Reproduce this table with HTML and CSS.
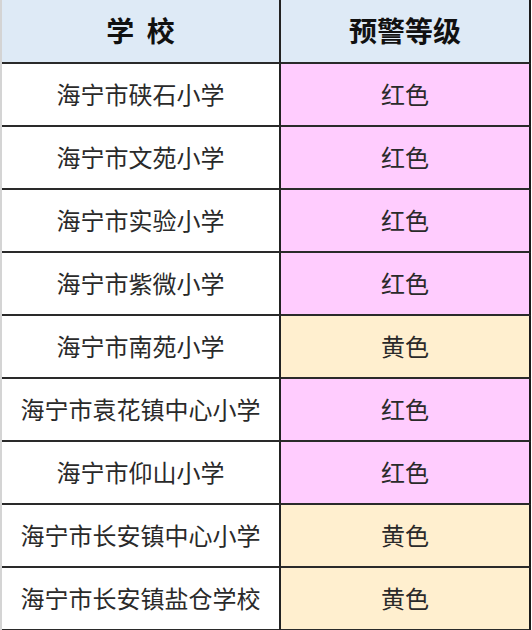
FILE: index.html
```html
<!DOCTYPE html>
<html lang="zh">
<head>
<meta charset="utf-8">
<title>预警等级</title>
<link rel="stylesheet" href="styles.css">
</head>
<body>
<table class="grid">
  <thead>
    <tr>
      <th class="col-school">学&nbsp;&nbsp;校</th>
      <th class="col-level">预警等级</th>
    </tr>
  </thead>
  <tbody>
    <tr><td class="col-school">海宁市硖石小学</td><td class="col-level red">红色</td></tr>
    <tr><td class="col-school">海宁市文苑小学</td><td class="col-level red">红色</td></tr>
    <tr><td class="col-school">海宁市实验小学</td><td class="col-level red">红色</td></tr>
    <tr><td class="col-school">海宁市紫微小学</td><td class="col-level red">红色</td></tr>
    <tr><td class="col-school">海宁市南苑小学</td><td class="col-level yellow">黄色</td></tr>
    <tr><td class="col-school">海宁市袁花镇中心小学</td><td class="col-level red">红色</td></tr>
    <tr><td class="col-school">海宁市仰山小学</td><td class="col-level red">红色</td></tr>
    <tr><td class="col-school">海宁市长安镇中心小学</td><td class="col-level yellow">黄色</td></tr>
    <tr><td class="col-school">海宁市长安镇盐仓学校</td><td class="col-level yellow">黄色</td></tr>
  </tbody>
</table>
</body>
</html>
```
FILE: styles.css
```css
html, body {
  margin: 0;
  padding: 0;
  background: #ffffff;
}

.grid {
  border-collapse: separate;
  border-spacing: 0;
  border-left: 2px solid #d4d4d4;
  font-family: "Noto Sans CJK SC", "Noto Sans", sans-serif;
  table-layout: fixed;
}

.grid th,
.grid td {
  padding: 0;
  text-align: center;
  vertical-align: middle;
  border-bottom: 2px solid #2a2a2a;
  box-sizing: border-box;
}

.grid th {
  height: 64px;
  background: #deeaf6;
  color: #111111;
  font-size: 28px;
  font-weight: 700;
  padding-bottom: 2px;
}

.grid td {
  height: 63px;
  color: #2a2a2a;
  font-size: 24px;
  font-weight: 400;
  padding-bottom: 3px;
}

.col-school {
  width: 279px;
  border-right: 2px solid #222222;
}

.col-level {
  width: 250px;
  border-right: 2px solid #1a1a1a;
}

.red {
  background: #ffccfe;
}

.yellow {
  background: #ffefcf;
}
```
